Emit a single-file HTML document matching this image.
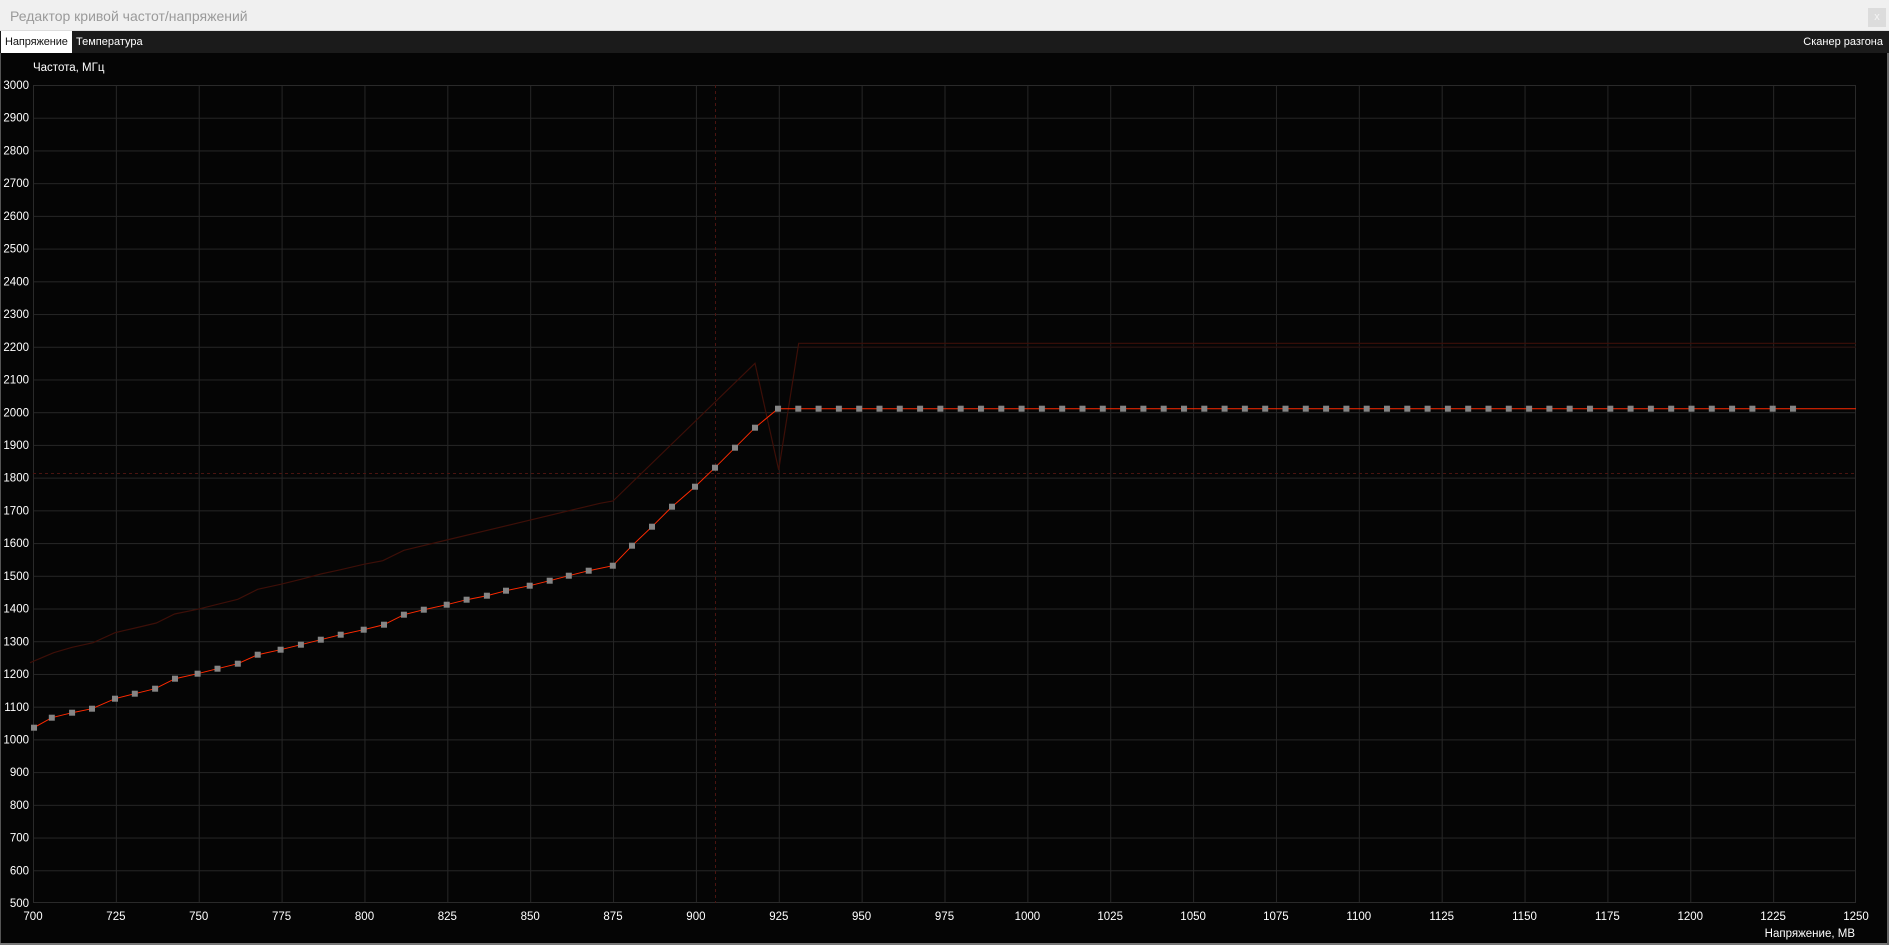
<!DOCTYPE html>
<html><head><meta charset="utf-8"><style>
html,body{margin:0;padding:0;width:1889px;height:945px;overflow:hidden;background:#000;font-family:"Liberation Sans","DejaVu Sans",sans-serif}
#title{position:absolute;left:0;top:0;width:1889px;height:31px;background:#f0f0f0;border-bottom:1px solid #ddd;box-sizing:border-box}
#title span{position:absolute;left:10px;top:8px;font-size:14px;color:#9a9a9a}
#close{position:absolute;left:1868px;top:8px;width:18px;height:19px;background:#dcdcdc;color:#f4f4f4;font-size:11px;text-align:center;line-height:18px}
#tabs{position:absolute;left:0;top:31px;width:1889px;height:22px;background:#1b1b1b;font-size:11px;color:#fff}
#tabs .a{position:absolute;left:1px;top:0;width:71px;height:22px;background:#fff;color:#111;line-height:22px;text-indent:4px;white-space:nowrap;overflow:hidden;letter-spacing:-0.1px}
#tabs .b{position:absolute;left:76px;top:0;line-height:22px}
#tabs .c{position:absolute;right:6px;top:0;line-height:22px}
svg{position:absolute;left:0;top:53px}
</style></head><body>
<div id="title"><span>Редактор кривой частот/напряжений</span><div id="close">x</div></div>
<div id="tabs"><div class="a">Напряжение</div><div class="b">Температура</div><div class="c">Сканер разгона</div></div>
<svg width="1889" height="892" viewBox="0 53 1889 892" xmlns="http://www.w3.org/2000/svg">
<defs>
<pattern id="g" x="33" y="85" width="82.864" height="32.72" patternUnits="userSpaceOnUse">
<path d="M0.5 0V32.72M0 0.5H82.864" stroke="#262626" stroke-width="1" fill="none"/>
</pattern>
<pattern id="sq" x="775" y="405.7" width="20.3" height="6" patternUnits="userSpaceOnUse">
<rect x="0" y="0" width="6" height="6" fill="#858585"/>
</pattern>
</defs>
<rect x="0" y="53" width="1889" height="892" fill="#050505"/>
<rect x="0" y="53" width="1" height="892" fill="#555"/>
<rect x="0" y="943" width="1889" height="2" fill="#777"/>
<rect x="1887" y="53" width="2" height="892" fill="#666"/>
<rect x="33" y="85" width="1823" height="818" fill="url(#g)"/>
<rect x="33.5" y="85.5" width="1822" height="817" fill="none" stroke="#2a2a2a"/>
<line x1="715.5" y1="85" x2="715.5" y2="903" stroke="#4a1410" stroke-dasharray="3,3"/>
<line x1="33" y1="473.5" x2="1856" y2="473.5" stroke="#4a1410" stroke-dasharray="3,3"/>
<polyline fill="none" stroke="#3d0f08" stroke-width="1.2" points="30,662.7 53.7,652.7 72.1,647.3 93.1,642.7 115,632.7 135.2,628 156.3,623 174.6,614 197.6,609.3 217.5,604.3 237.8,599.3 257.7,589.3 280.6,584.3 300.9,579.3 320.8,574 340.7,569.7 363.7,564.3 382.8,560.7 403.9,550.3 446.7,540 600,503.3 613,501 755,363.3 778.7,470 798.7,343.3 1856,343.3"/>
<line x1="798.7" y1="347" x2="1856" y2="347" stroke="#2a0a06"/>
<polyline fill="none" stroke="#ff2a00" stroke-width="1" points="33.8,727.7 51.8,717.7 72.1,712.7 92,708.7 115,698.7 134.8,693.7 155.1,688.7 175,678.7 197.6,673.7 217.5,668.7 237.8,663.7 257.7,654.7 280.6,649.7 300.9,644.7 320.8,639.7 340.7,634.7 363.7,629.7 384,624.7 403.9,614.7 423.8,609.7 446.7,604.7 466.6,599.7 486.9,595.7 506,590.7 529.7,585.7 549.7,580.7 568.8,575.7 588.7,570.7 612.8,565.7 632,545.7 652,526.7 672,506.7 695,486.7 715,467.7 735,447.7 755,427.7 778,408.7 1856,408.7"/>
<g fill="#858585">
<rect x="31" y="724.7" width="6" height="6"/><rect x="48.8" y="714.7" width="6" height="6"/><rect x="69.1" y="709.7" width="6" height="6"/><rect x="89" y="705.7" width="6" height="6"/><rect x="112" y="695.7" width="6" height="6"/><rect x="131.8" y="690.7" width="6" height="6"/><rect x="152.1" y="685.7" width="6" height="6"/><rect x="172" y="675.7" width="6" height="6"/><rect x="194.6" y="670.7" width="6" height="6"/><rect x="214.5" y="665.7" width="6" height="6"/><rect x="234.8" y="660.7" width="6" height="6"/><rect x="254.7" y="651.7" width="6" height="6"/><rect x="277.6" y="646.7" width="6" height="6"/><rect x="297.9" y="641.7" width="6" height="6"/><rect x="317.8" y="636.7" width="6" height="6"/><rect x="337.7" y="631.7" width="6" height="6"/><rect x="360.7" y="626.7" width="6" height="6"/><rect x="381" y="621.7" width="6" height="6"/><rect x="400.9" y="611.7" width="6" height="6"/><rect x="420.8" y="606.7" width="6" height="6"/><rect x="443.7" y="601.7" width="6" height="6"/><rect x="463.6" y="596.7" width="6" height="6"/><rect x="483.9" y="592.7" width="6" height="6"/><rect x="503" y="587.7" width="6" height="6"/><rect x="526.7" y="582.7" width="6" height="6"/><rect x="546.7" y="577.7" width="6" height="6"/><rect x="565.8" y="572.7" width="6" height="6"/><rect x="585.7" y="567.7" width="6" height="6"/><rect x="609.8" y="562.7" width="6" height="6"/><rect x="629" y="542.7" width="6" height="6"/><rect x="649" y="523.7" width="6" height="6"/><rect x="669" y="503.7" width="6" height="6"/><rect x="692" y="483.7" width="6" height="6"/><rect x="712" y="464.7" width="6" height="6"/><rect x="732" y="444.7" width="6" height="6"/><rect x="752" y="424.7" width="6" height="6"/>
</g>
<rect x="775" y="405.7" width="1024" height="6" fill="url(#sq)"/>
<g fill="#fff" font-size="11.5" font-family="Liberation Sans, sans-serif" text-anchor="end">
<text x="29" y="89">3000</text><text x="29" y="121.7">2900</text><text x="29" y="154.5">2800</text><text x="29" y="187.2">2700</text><text x="29" y="219.9">2600</text><text x="29" y="252.6">2500</text><text x="29" y="285.4">2400</text><text x="29" y="318.1">2300</text><text x="29" y="350.8">2200</text><text x="29" y="383.5">2100</text><text x="29" y="416.3">2000</text><text x="29" y="449">1900</text><text x="29" y="481.7">1800</text><text x="29" y="514.4">1700</text><text x="29" y="547.2">1600</text><text x="29" y="579.9">1500</text><text x="29" y="612.6">1400</text><text x="29" y="645.3">1300</text><text x="29" y="678.1">1200</text><text x="29" y="710.8">1100</text><text x="29" y="743.5">1000</text><text x="29" y="776.2">900</text><text x="29" y="809">800</text><text x="29" y="841.7">700</text><text x="29" y="874.4">600</text><text x="29" y="907">500</text>
</g>
<g fill="#fff" font-size="11.5" font-family="Liberation Sans, sans-serif" text-anchor="middle">
<text x="33" y="920">700</text><text x="115.9" y="920">725</text><text x="198.7" y="920">750</text><text x="281.6" y="920">775</text><text x="364.5" y="920">800</text><text x="447.3" y="920">825</text><text x="530.2" y="920">850</text><text x="613" y="920">875</text><text x="695.9" y="920">900</text><text x="778.8" y="920">925</text><text x="861.6" y="920">950</text><text x="944.5" y="920">975</text><text x="1027.4" y="920">1000</text><text x="1110.2" y="920">1025</text><text x="1193.1" y="920">1050</text><text x="1275.9" y="920">1075</text><text x="1358.8" y="920">1100</text><text x="1441.7" y="920">1125</text><text x="1524.5" y="920">1150</text><text x="1607.4" y="920">1175</text><text x="1690.3" y="920">1200</text><text x="1773.1" y="920">1225</text><text x="1856" y="920">1250</text>
</g>
<text x="33" y="71" fill="#fff" font-size="11.5" font-family="Liberation Sans, sans-serif">Частота, МГц</text>
<text x="1855" y="937" fill="#fff" font-size="11.5" font-family="Liberation Sans, sans-serif" text-anchor="end">Напряжение, МВ</text>
</svg>
</body></html>
